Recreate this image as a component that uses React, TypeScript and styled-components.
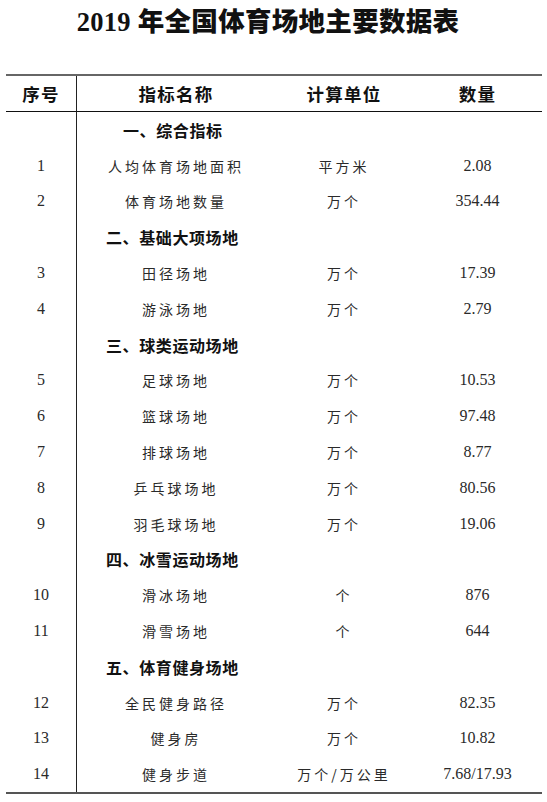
import React from 'react';
import styled, { createGlobalStyle } from 'styled-components';

type Item = { no: number; name: string; unit: string; value: string };
type Section = { title: string; items: Item[] };

const sections: Section[] = [
  {
    title: '一、综合指标',
    items: [
      { no: 1, name: '人均体育场地面积', unit: '平方米', value: '2.08' },
      { no: 2, name: '体育场地数量', unit: '万个', value: '354.44' },
    ],
  },
  {
    title: '二、基础大项场地',
    items: [
      { no: 3, name: '田径场地', unit: '万个', value: '17.39' },
      { no: 4, name: '游泳场地', unit: '万个', value: '2.79' },
    ],
  },
  {
    title: '三、球类运动场地',
    items: [
      { no: 5, name: '足球场地', unit: '万个', value: '10.53' },
      { no: 6, name: '篮球场地', unit: '万个', value: '97.48' },
      { no: 7, name: '排球场地', unit: '万个', value: '8.77' },
      { no: 8, name: '乒乓球场地', unit: '万个', value: '80.56' },
      { no: 9, name: '羽毛球场地', unit: '万个', value: '19.06' },
    ],
  },
  {
    title: '四、冰雪运动场地',
    items: [
      { no: 10, name: '滑冰场地', unit: '个', value: '876' },
      { no: 11, name: '滑雪场地', unit: '个', value: '644' },
    ],
  },
  {
    title: '五、体育健身场地',
    items: [
      { no: 12, name: '全民健身路径', unit: '万个', value: '82.35' },
      { no: 13, name: '健身房', unit: '万个', value: '10.82' },
      { no: 14, name: '健身步道', unit: '万个/万公里', value: '7.68/17.93' },
    ],
  },
];

const GlobalStyle = createGlobalStyle`
  html, body {
    margin: 0;
    padding: 0;
    background: #fff;
  }
  body {
    font-family: "Liberation Serif", "Noto Sans CJK SC", serif;
    color: #222;
  }
`;

const Page = styled.div`
  width: 547px;
  height: 802px;
  display: flex;
  flex-direction: column;
  padding: 0 5px 0 6px;
  box-sizing: border-box;
`;

const Title = styled.h1`
  margin: 5px 0 0;
  height: 34px;
  line-height: 34px;
  text-align: center;
  font-family: "Liberation Serif", "Noto Sans CJK SC", serif;
  font-weight: 900;
  font-size: 26.5px;
  color: #111;
  letter-spacing: 0.3px;
  padding-right: 12px;
`;

const Table = styled.div`
  margin-top: 35px;
  display: grid;
  grid-template-columns: 71px 198px 138px 129px;
  border-top: 2px solid #666;
  border-bottom: 2px solid #555;
`;

const HeadCell = styled.div<{ $first?: boolean }>`
  height: 35px;
  display: flex;
  align-items: center;
  justify-content: center;
  font-family: "Noto Sans CJK SC", sans-serif;
  font-weight: 700;
  font-size: 17.5px;
  letter-spacing: 1.2px;
  color: #111;
  border-bottom: 1.5px solid #111;
  border-right: ${(p) => (p.$first ? '1.5px solid #222' : 'none')};
`;

const Cell = styled.div<{ $first?: boolean; $kind?: 'no' | 'name' | 'unit' | 'value' }>`
  height: 35.8px;
  display: flex;
  align-items: center;
  justify-content: center;
  color: #2a2a2a;
  border-right: ${(p) => (p.$first ? '1.5px solid #222' : 'none')};
  font-family: ${(p) =>
    p.$kind === 'no' || p.$kind === 'value'
      ? '"Liberation Serif", serif'
      : '"Noto Sans CJK SC", sans-serif'};
  font-size: ${(p) => (p.$kind === 'no' || p.$kind === 'value' ? '16px' : '14px')};
  letter-spacing: ${(p) => (p.$kind === 'name' || p.$kind === 'unit' ? '3px' : '0')};
  font-weight: 400;
`;

const SectionCell = styled.div<{ $short?: boolean }>`
  grid-column: 2 / span 3;
  height: 35.8px;
  display: flex;
  align-items: center;
  padding-left: ${(p) => (p.$short ? '46px' : '29px')};
  font-family: "Noto Sans CJK SC", sans-serif;
  font-weight: 700;
  font-size: 16px;
  letter-spacing: 0.6px;
  color: #111;
`;

export default function App() {
  return (
    <>
      <GlobalStyle />
      <Page>
        <Title>2019 年全国体育场地主要数据表</Title>
        <Table>
          <HeadCell $first>序号</HeadCell>
          <HeadCell>指标名称</HeadCell>
          <HeadCell>计算单位</HeadCell>
          <HeadCell>数量</HeadCell>
          {sections.map((s, i) => (
            <React.Fragment key={s.title}>
              <Cell $first $kind="no" />
              <SectionCell $short={i === 0}>{s.title}</SectionCell>
              {s.items.map((it) => (
                <React.Fragment key={it.no}>
                  <Cell $first $kind="no">{it.no}</Cell>
                  <Cell $kind="name">{it.name}</Cell>
                  <Cell $kind="unit">{it.unit}</Cell>
                  <Cell $kind="value">{it.value}</Cell>
                </React.Fragment>
              ))}
            </React.Fragment>
          ))}
        </Table>
      </Page>
    </>
  );
}
